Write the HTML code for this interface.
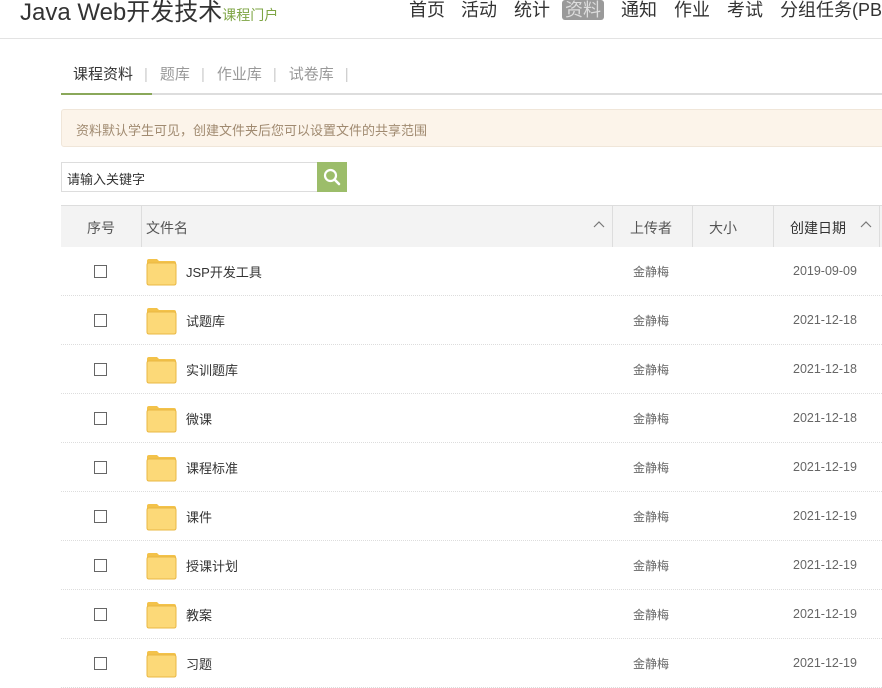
<!DOCTYPE html>
<html><head><meta charset="utf-8"><style>
*{margin:0;padding:0;box-sizing:border-box}
body{width:882px;height:680px;overflow:hidden;background:#fff;font-family:"Liberation Sans","Noto Sans CJK SC",sans-serif;color:#333;position:relative}
.a{position:absolute;white-space:nowrap}
.title{left:20px;top:-8px;font-size:24px;color:#333}
.title small{font-size:14px;color:#7ea544}
.nav{top:-4px;font-size:18px;color:#333}
.hl{background:#9a9a9a;color:#ddd;border-radius:3px;padding:0 3px}
.line{left:0;top:38px;width:882px;height:1px;background:#e3e3e3}
.tabs{top:63px;left:73px;font-size:15px;color:#999}
.tabs b{font-weight:normal;color:#333}
.tabs i{font-style:normal;color:#ccc;margin:0 12px 0 11px}
.notice{left:61px;top:109px;width:830px;height:38px;background:#fcf4ea;border:1px solid #f0e6d9;border-radius:3px;font-size:13px;color:#a08a70;padding:10px 14px}
.inp{left:61px;top:162px;width:256px;height:30px;border:1px solid #ddd;border-right:none;font-size:13px;color:#333;padding:6px 5px}
.btn{left:317px;top:162px;width:30px;height:30px;background:#9cbd6a}
.th{left:61px;top:205px;width:821px;height:42px;background:#f3f3f3;border-top:1px solid #ddd;font-size:14px;color:#555}
.th span{position:absolute;top:12px}
.sep{position:absolute;top:0;width:1px;height:41px;background:#ddd}
.row{left:61px;width:821px;height:49px;border-bottom:1px dotted #ddd;font-size:13px}
.row .cb{position:absolute;left:33px;top:18px;width:13px;height:13px;border:1px solid #666;background:#fff}
.row .f{position:absolute;left:85px;top:10px}
.row .n{position:absolute;left:125px;top:15px;color:#333}
.row .u{position:absolute;left:572px;top:16px;color:#666;font-size:12px}
.row .d{position:absolute;left:732px;top:17px;color:#666;font-size:12.5px}
</style></head><body>
<div class="a title">Java Web开发技术<small>课程门户</small></div>
<div class="a nav" style="left:409px">首页</div>
<div class="a nav" style="left:461px">活动</div>
<div class="a nav" style="left:514px">统计</div>
<div class="a nav" style="left:562px"><span class="hl">资料</span></div>
<div class="a nav" style="left:621px">通知</div>
<div class="a nav" style="left:674px">作业</div>
<div class="a nav" style="left:727px">考试</div>
<div class="a nav" style="left:780px">分组任务(PBL)</div>
<div class="a line"></div>
<div class="a tabs"><b>课程资料</b><i>|</i>题库<i>|</i>作业库<i>|</i>试卷库<i>|</i></div>
<div class="a" style="left:61px;top:93px;width:821px;height:2px;background:#ddd"></div>
<div class="a" style="left:61px;top:93px;width:91px;height:2px;background:#8aa85a"></div>
<div class="a notice">资料默认学生可见，创建文件夹后您可以设置文件的共享范围</div>
<div class="a inp">请输入关键字</div>
<div class="a btn"><svg width="30" height="30" viewBox="0 0 30 30"><circle cx="13.5" cy="13.5" r="5.5" fill="none" stroke="#fff" stroke-width="2.2"/><line x1="17.5" y1="17.5" x2="22" y2="22" stroke="#fff" stroke-width="2.6" stroke-linecap="round"/></svg></div>
<div class="a th">
<span style="left:26px">序号</span><div class="sep" style="left:80px"></div>
<span style="left:85px">文件名</span>
<svg style="position:absolute;left:532px;top:14px" width="12" height="8"><path d="M1 7 L6 2 L11 7" fill="none" stroke="#777" stroke-width="1.2"/></svg>
<div class="sep" style="left:551px"></div><span style="left:569px">上传者</span>
<div class="sep" style="left:631px"></div><span style="left:648px">大小</span>
<div class="sep" style="left:712px"></div><span style="left:729px;color:#333">创建日期</span>
<svg style="position:absolute;left:799px;top:14px" width="12" height="8"><path d="M1 7 L6 2 L11 7" fill="none" stroke="#777" stroke-width="1.2"/></svg>
<div class="sep" style="left:818px"></div>
</div>
<div id="rows"></div>
<script>
var d=[["JSP开发工具","2019-09-09"],["试题库","2021-12-18"],["实训题库","2021-12-18"],["微课","2021-12-18"],["课程标准","2021-12-19"],["课件","2021-12-19"],["授课计划","2021-12-19"],["教案","2021-12-19"],["习题","2021-12-19"]];
var h="";d.forEach(function(r,i){h+='<div class="a row" style="top:'+(247+i*49)+'px"><div class="cb"></div><div class="f"><svg width="31" height="29" viewBox="0 0 31 29"><path d="M1 4 Q1 2 3 2 L11 2 L13 4 L28 4 Q30 4 30 6 L30 26 Q30 28 28 28 L3 28 Q1 28 1 26Z" fill="#f3c24a"/><path d="M1 8 Q1 6 3 6 L28 6 Q30 6 30 8 L30 26 Q30 28 28 28 L3 28 Q1 28 1 26Z" fill="#fcd978" stroke="#eab843" stroke-width="1"/></svg></div><div class="n">'+r[0]+'</div><div class="u">金静梅</div><div class="d">'+r[1]+'</div></div>'});
document.getElementById("rows").innerHTML=h;
</script>
</body></html>
